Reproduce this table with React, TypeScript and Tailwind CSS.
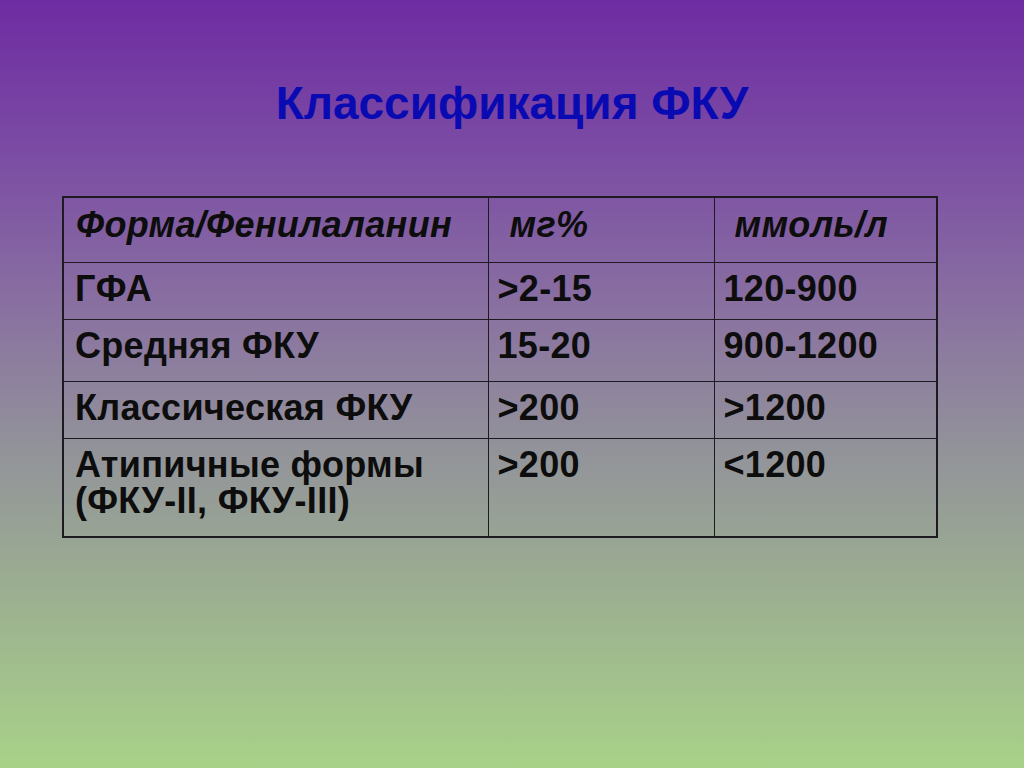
import React from 'react'

const rows: { h: string; cells: string[][] }[] = [
  { h: 'h-[57px]', cells: [['ГФА'], ['>2-15'], ['120-900']] },
  { h: 'h-[62px]', cells: [['Средняя ФКУ'], ['15-20'], ['900-1200']] },
  { h: 'h-[57px]', cells: [['Классическая ФКУ'], ['>200'], ['>1200']] },
  { h: 'h-[99px]', cells: [['Атипичные формы', '(ФКУ-II, ФКУ-III)'], ['>200'], ['<1200']] },
]

export default function App() {
  return (
    <div
      className="w-[1024px] h-[768px] overflow-hidden bg-[linear-gradient(180deg,#6e2ca2_0%,#7b4ca4_20%,#8a74a0_42%,#92929a_58%,#9cb090_78%,#a8d288_100%)]"
      style={{ fontFamily: '"Liberation Sans", Arial, sans-serif' }}
    >
      <h1 className="pt-[74px] text-center text-[46px] font-bold leading-[58px] text-[#0a0ab2]">
        Классификация ФКУ
      </h1>

      <div className="mt-[64px] ml-[62px]">
        <table className="w-[874px] border-collapse border-2 border-[#1e1a22] text-[36px] leading-[36px] font-bold text-[#0d0d0d] table-fixed tracking-[0.3px]">
          <colgroup>
            <col className="w-[425px]" />
            <col className="w-[226px]" />
            <col className="w-[223px]" />
          </colgroup>
          <thead>
            <tr className="h-[65px]">
              <th className="border border-[#1e1a22] align-top pt-[9px] pl-[12px] text-left italic font-bold">
                Форма/Фенилаланин
              </th>
              <th className="border border-[#1e1a22] align-top pt-[9px] pl-[21px] text-left italic font-bold">
                мг%
              </th>
              <th className="border border-[#1e1a22] align-top pt-[9px] pl-[20px] text-left italic font-bold">
                ммоль/л
              </th>
            </tr>
          </thead>
          <tbody>
            {rows.map((r, i) => (
              <tr key={i} className={r.h}>
                {r.cells.map((c, j) => (
                  <td
                    key={j}
                    className={
                      'border border-[#1e1a22] align-top pt-[8px] ' +
                      (j === 0 ? 'pl-[11px]' : 'pl-[9px]')
                    }
                  >
                    {c.map((line, k) => (
                      <div key={k}>{line}</div>
                    ))}
                  </td>
                ))}
              </tr>
            ))}
          </tbody>
        </table>
      </div>
    </div>
  )
}
